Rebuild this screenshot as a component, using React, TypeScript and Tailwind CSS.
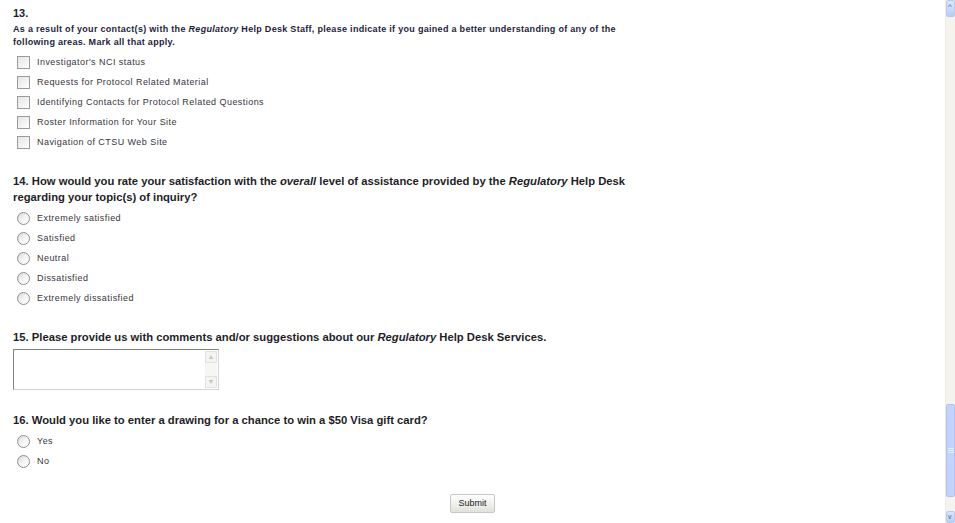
import React from 'react';

const checks = [
  "Investigator's NCI status",
  'Requests for Protocol Related Material',
  'Identifying Contacts for Protocol Related Questions',
  'Roster Information for Your Site',
  'Navigation of CTSU Web Site',
];

const ratings = ['Extremely satisfied', 'Satisfied', 'Neutral', 'Dissatisfied', 'Extremely dissatisfied'];

const Box = () => (
  <span className="block w-[13px] h-[13px] border border-[#9a9a9a] bg-gradient-to-br from-[#e4e4e4] to-white" />
);

const Radio = () => (
  <span className="block w-[13px] h-[13px] rounded-full border border-[#8f8f8f] bg-gradient-to-br from-[#d8d8d8] via-[#f4f4f4] to-white" />
);

const Row = ({ label, children }: { label: string; children: React.ReactNode }) => (
  <div className="flex items-center h-[20px] pl-[17px]">
    {children}
    <span className="ml-[7px] text-[9px] leading-[12px] tracking-[0.45px] text-[#3a3440]">{label}</span>
  </div>
);

const Heading = ({ children }: { children: React.ReactNode }) => (
  <div className="text-[11.25px] leading-[16px] font-bold text-[#1e1e28] w-[640px]">{children}</div>
);

const App = () => {
  return (
    <div className="flex w-[955px] h-[523px] bg-white overflow-hidden" style={{ fontFamily: '"Liberation Sans", Arial, sans-serif' }}>
      <div className="flex-1 pl-[13px] pt-[6px]">
        <div className="text-[11px] leading-[14px] font-bold text-[#1e1e28]">13.</div>
        <div className="mt-[3px] text-[9px] leading-[13px] font-bold tracking-[0.3px] text-[#1e1e3c] w-[625px]">
          As a result of your contact(s) with the <i>Regulatory</i> Help Desk Staff, please indicate if you gained a better understanding of any of the following areas. Mark all that apply.
        </div>
        <div className="mt-[3px] -ml-[13px]">
          {checks.map((c) => (
            <Row key={c} label={c}>
              <Box />
            </Row>
          ))}
        </div>

        <div className="mt-[21px]">
          <Heading>
            14. How would you rate your satisfaction with the <i>overall</i> level of assistance provided by the <i>Regulatory</i> Help Desk regarding your topic(s) of inquiry?
          </Heading>
        </div>
        <div className="mt-[3px] -ml-[13px]">
          {ratings.map((r) => (
            <Row key={r} label={r}>
              <Radio />
            </Row>
          ))}
        </div>

        <div className="mt-[21px]">
          <Heading>
            15. Please provide us with comments and/or suggestions about our <i>Regulatory</i> Help Desk Services.
          </Heading>
        </div>
        <div className="mt-[4px] flex w-[206px] h-[41px] border border-[#7f7f7f] border-r-[#d4d4d4] border-b-[#d4d4d4] bg-white">
          <div className="flex-1" />
          <div className="w-[12px] m-[1px] flex flex-col justify-between bg-[#f6f6f4]">
            <span className="h-[12px] border border-[#e2e2de] bg-[#f4f4f0] text-[7px] leading-[10px] text-center text-[#c4c4c4]">▲</span>
            <span className="h-[12px] border border-[#e2e2de] bg-[#f4f4f0] text-[7px] leading-[10px] text-center text-[#c4c4c4]">▼</span>
          </div>
        </div>

        <div className="mt-[22px]">
          <Heading>16. Would you like to enter a drawing for a chance to win a $50 Visa gift card?</Heading>
        </div>
        <div className="mt-[3px] -ml-[13px]">
          {['Yes', 'No'].map((r) => (
            <Row key={r} label={r}>
              <Radio />
            </Row>
          ))}
        </div>

        <div className="mt-[23px] flex justify-center -ml-[13px]">
          <button className="h-[19px] px-[7px] border border-[#c8c8c0] rounded-[2px] bg-gradient-to-b from-white to-[#e2e2dc] text-[9px] text-[#222]">
            Submit
          </button>
        </div>
      </div>

      <div className="w-[10px] flex flex-col bg-[#f4f3ee] border-l border-[#ecebe4]">
        <div className="h-[17px] rounded-[2px] bg-gradient-to-b from-[#dce6fb] to-[#b8cdf6] border border-[#b8c8ee] text-[8px] leading-[12px] text-[#4d6185] pl-[1px]">^</div>
        <div className="h-[387px]" />
        <div className="h-[93px] rounded-[2px] bg-[#c3d3fd] border border-[#b0c3f0] flex items-center">
          <div className="w-[6px] ml-[1px] flex flex-col gap-[1px]">
            <span className="h-px bg-[#e8efff]" />
            <span className="h-px bg-[#e8efff]" />
            <span className="h-px bg-[#e8efff]" />
          </div>
        </div>
        <div className="flex-1" />
        <div className="h-[12px] rounded-[2px] bg-gradient-to-b from-[#dce6fb] to-[#b8cdf6] border border-[#b8c8ee] text-[7px] leading-[10px] text-[#4d6185] pl-[1px]">v</div>
      </div>
    </div>
  );
};

export default App;
